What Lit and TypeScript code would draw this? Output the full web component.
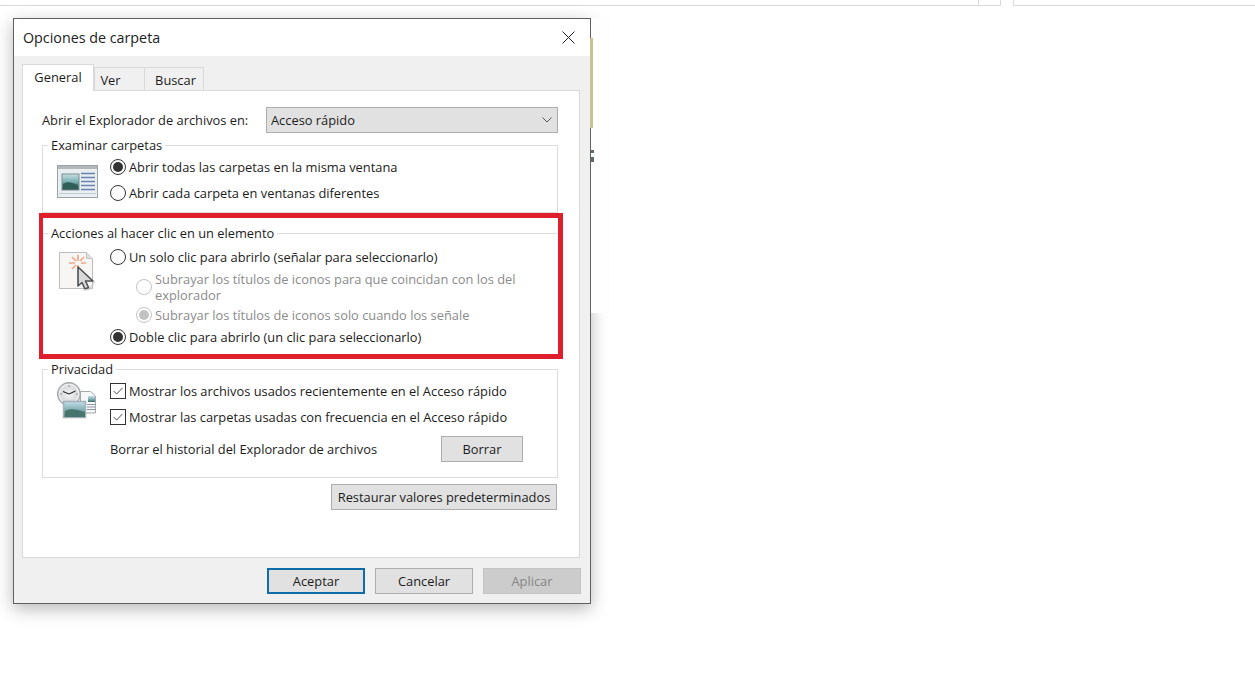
import { LitElement, html, css, svg } from "lit";
import { customElement } from "lit/decorators.js";

const docIcon = svg`<svg class="ico ico1" width="42" height="34" viewBox="0 0 42 34">
  <defs><linearGradient id="p1" x1="0" y1="0" x2="0" y2="1"><stop offset="0" stop-color="#c6e0e4"/><stop offset=".5" stop-color="#78aeb0"/><stop offset="1" stop-color="#1f4d48"/></linearGradient></defs>
  <rect x=".5" y=".5" width="40" height="32" fill="#e9eef1" stroke="#9aa3a8"/>
  <rect x="1" y="1" width="39" height="3" fill="#b4b8ba"/>
  <rect x="5" y="9" width="17" height="16" fill="url(#p1)" stroke="#7d8b92"/>
  <path d="M6 19c4-3 8-2 15 1v4H6z" fill="#2f5f58"/>
  <path d="M24 8.500h14M24 12.500h14M24 16.500h14M24 20.500h14M24 24.500h14" stroke="#6a82b4" stroke-width="1.400"/>
  <path d="M2 28.500h37" stroke="#c3c8cc"/>
</svg>`;

const clickIcon = svg`<svg class="ico ico2" width="38" height="42" viewBox="0 0 38 42">
  <path d="M1.500 2.500h27l6 6v30h-33z" fill="#f7f6f4" stroke="#bcbcbc"/>
  <path d="M28.500 2.500v6h6" fill="#e0e0e0" stroke="#c6c6c6"/>
  <path d="M20 5v6M20 15v4M11 13h6M23 13h5M14 7l4 4M14 19l4-4M26 7l-4 4" stroke="#f0a888" stroke-width="1.700" fill="none"/>
  <path d="M20 17v19l4-3.500 3 6.500 3.500-1.500-3-6.500H35z" fill="#d9d9d9" stroke="#4d5054" stroke-width="1.600" stroke-linejoin="round"/>
  <path d="M25 40l6-.5 6-8" fill="none" stroke="#c9c9c9" stroke-width="1.500" opacity=".7"/>
</svg>`;

const privacyIcon = svg`<svg class="ico ico3" width="42" height="38" viewBox="0 0 42 38">
  <defs>
    <radialGradient id="c1"><stop offset="0" stop-color="#f4f4f4"/><stop offset=".7" stop-color="#d9dbdd"/><stop offset=".85" stop-color="#f0f1f2"/><stop offset="1" stop-color="#9ca2a7"/></radialGradient>
    <linearGradient id="p3" x1="0" y1="0" x2="0" y2="1"><stop offset="0" stop-color="#c4e0ea"/><stop offset=".5" stop-color="#85b0b6"/><stop offset="1" stop-color="#3f6f68"/></linearGradient>
  </defs>
  <circle cx="12" cy="12" r="11.500" fill="url(#c1)" stroke="#9aa0a5"/>
  <path d="M12 12L6 9.500M12 12l6.500-3" stroke="#2c2f33" stroke-width="1.200" fill="none"/>
  <path d="M12 3v2M12 19v2M3 12h2M19 12h2" stroke="#8f8f8f"/>
  <path d="M23.500 9.500h10l5 4.500v17h-15z" fill="#f6f7f8" stroke="#a2a8ad"/>
  <rect x="31" y="14" width="7" height="6" fill="url(#p3)"/>
  <path d="M30 22.500h8M30 25h8M30 27.500h8" stroke="#8c98b0"/>
  <rect x="6.500" y="19.500" width="22" height="16" fill="url(#p3)" stroke="#a3b0ba" stroke-width="1.500"/>
  <path d="M8 29c5-3 11-2 20 1v5H8z" fill="#47756d"/>
</svg>`;

@customElement("app-root")
export class AppRoot extends LitElement {
  static styles = css`
    :host { display: block; position: relative; width: 1255px; height: 675px; background: #fff; overflow: hidden;
      font-family: "Open Sans", "Noto Sans", sans-serif; font-size: 12.85px; color: #1c1c1c; }
    * { box-sizing: border-box; }
    .top { display: flex; height: 6px; border-bottom: 1px solid #d9d9d9; }
    .top .a { width: 978px; }
    .top .b { width: 23px; border-left: 1px solid #d9d9d9; border-right: 1px solid #d9d9d9; }
    .top .c { width: 12px; background: #fff; margin-bottom: -1px; }
    .top .d { flex: 1; border-left: 1px solid #d9d9d9; }
    .behind { position: absolute; left: 591px; top: 18px; width: 20px; height: 295px; background: #fefefe; }
    .strip { position: absolute; left: 590px; top: 38px; width: 3px; height: 90px; background: #c9c194; }
    .frag { position: absolute; left: 591px; top: 150px; width: 3px; height: 12px; border-top: 3px solid #5c6770; border-bottom: 5px solid #5c6770; }
    .dialog { position: absolute; left: 13px; top: 18px; width: 578px; height: 586px; display: flex; flex-direction: column;
      background: #f0f0f0; border: 1px solid #5f5f5f; box-shadow: 0 5px 16px rgba(0,0,0,.28); }
    .title { height: 37px; flex: none; background: #fff; display: flex; align-items: center; justify-content: space-between; padding: 0 15px 0 9px; font-size: 14.3px; color: #222; }
    .close { display: block; }
    .body { flex: 1; display: flex; flex-direction: column; padding: 8px 10px 9px 8px; }
    .tabs { display: flex; align-items: flex-end; height: 26px; flex: none; position: relative; z-index: 1; }
    .tab { height: 23px; background: #f0f0f0; border: 1px solid #d9d9d9; border-bottom: none; margin-left: -1px; display: flex; align-items: center; justify-content: center; padding-top: 2px; }
    .tab.active { height: 27px; margin: 0 0 -1px 0; background: #fff; width: 72px; padding: 0 0 3px; }
    .tab.ver { width: 51px; margin-left: 0; padding-right: 18px; }
    .tab.buscar { width: 60px; padding-left: 3px; }
    .panel { height: 468px; flex: none; background: #fff; border: 1px solid #d9d9d9; padding: 16px 21px 0 19px; display: flex; flex-direction: column; }
    .combo-row { display: flex; align-items: center; justify-content: space-between; height: 26px; flex: none; }
    .combo { width: 292px; height: 26px; background: #e1e1e1; border: 1px solid #adadad; display: flex; align-items: center; justify-content: space-between; padding: 0 5px 0 4px; }
    .group { border: 1px solid #dcdcdc; flex: none; width: 516px; }
    .g1 { margin-top: 12px; height: 68px; }
    .g2 { margin-top: 20px; height: 123px; border-right-color: transparent; }
    .g3 { margin-top: 13px; height: 109px; }
    .legend { width: fit-content; height: 16px; line-height: 17px; margin: -9px 0 0 5px; padding: 0 3px; background: #fff; }
    .gbody { display: flex; }
    .iconcol { width: 67px; flex: none; }
    .ico { display: block; }
    .ico1 { margin: 11px 0 0 14px; }
    .ico2 { margin: 4px 0 0 15px; }
    .ico3 { margin: 4px 0 0 14px; }
    .rows { flex: 1; display: flex; flex-direction: column; }
    .g1 .gbody { margin-top: 1px; }
    .g2 .gbody { margin-top: 5px; }
    .g3 .gbody { margin-top: 1px; }
    .row { display: flex; align-items: center; gap: 3px; height: 26px; flex: none; }
    .row.r22 { height: 22px; }
    .row.sub { margin-left: 26px; color: #8b8b8b; line-height: 16px; height: 16px; }
    .row.sub.two { height: 32px; margin-top: 3px; }
    .row.sub.low { margin-top: 4px; margin-bottom: 3px; }
    .radio { width: 16px; height: 16px; border-radius: 50%; border: 1px solid #333; background: #fff; flex: none; display: flex; align-items: center; justify-content: center; }
    .radio.on::after { content: ""; width: 10px; height: 10px; border-radius: 50%; background: #333; }
    .sub .radio { border-color: #c4c4c4; }
    .sub .radio.on::after { background: #c2c2c2; }
    .check { width: 16px; height: 16px; border: 1px solid #333; background: #fff; flex: none; display: block; }
    .clear { margin-top: 6px; display: flex; align-items: center; justify-content: space-between; height: 26px; padding-right: 34px; }
    .btn { height: 26px; background: #e1e1e1; border: 1px solid #adadad; display: flex; align-items: center; justify-content: center; flex: none; }
    .borrar { width: 82px; }
    .restore-row { display: flex; justify-content: flex-end; margin-top: 6px; }
    .restore { width: 226px; margin-right: 1px; }
    .footer { display: flex; justify-content: flex-end; gap: 10px; margin-top: 10px; margin-right: -1px; }
    .footer .btn { width: 98px; }
    .primary { border: 2px solid #0f6ca8; }
    .disabled { background: #cccccc; border-color: #c4c4c4; color: #858585; }
    .red { position: absolute; left: 39px; top: 213px; width: 524px; height: 146px; border: 5px solid #e01f2d; border-left-width: 4px; pointer-events: none; }
  `;

  private radio(on = false) {
    return html`<span class="radio ${on ? "on" : ""}"></span>`;
  }

  private check() {
    return html`<svg class="check" viewBox="0 0 16 16"><path d="M3 8l3.500 3.500L13 4.500" fill="none" stroke="#333" stroke-width="1"/></svg>`;
  }

  render() {
    return html`
      <div class="top"><div class="a"></div><div class="b"></div><div class="c"></div><div class="d"></div></div>
      <div class="dialog">
        <div class="title">
          <span>Opciones de carpeta</span>
          <svg class="close" width="13" height="13" viewBox="0 0 13 13"><path d="M.5.5l12 12M12.500.5l-12 12" stroke="#222" fill="none"/></svg>
        </div>
        <div class="body">
          <div class="tabs">
            <div class="tab active">General</div>
            <div class="tab ver">Ver</div>
            <div class="tab buscar">Buscar</div>
          </div>
          <div class="panel">
            <div class="combo-row">
              <span>Abrir el Explorador de archivos en:</span>
              <div class="combo">
                <span>Acceso rápido</span>
                <svg width="10" height="6" viewBox="0 0 10 6"><path d="M.5.500L5 5 9.500.5" fill="none" stroke="#555"/></svg>
              </div>
            </div>
            <div class="group g1">
              <div class="legend">Examinar carpetas</div>
              <div class="gbody">
                <div class="iconcol">${docIcon}</div>
                <div class="rows">
                  <div class="row">${this.radio(true)}<span>Abrir todas las carpetas en la misma ventana</span></div>
                  <div class="row">${this.radio()}<span>Abrir cada carpeta en ventanas diferentes</span></div>
                </div>
              </div>
            </div>
            <div class="group g2">
              <div class="legend">Acciones al hacer clic en un elemento</div>
              <div class="gbody">
                <div class="iconcol">${clickIcon}</div>
                <div class="rows">
                  <div class="row r22">${this.radio()}<span>Un solo clic para abrirlo (señalar para seleccionarlo)</span></div>
                  <div class="row sub two">${this.radio()}<span>Subrayar los títulos de iconos para que coincidan con los del<br>explorador</span></div>
                  <div class="row sub low">${this.radio(true)}<span>Subrayar los títulos de iconos solo cuando los señale</span></div>
                  <div class="row r22">${this.radio(true)}<span>Doble clic para abrirlo (un clic para seleccionarlo)</span></div>
                </div>
              </div>
            </div>
            <div class="group g3">
              <div class="legend">Privacidad</div>
              <div class="gbody">
                <div class="iconcol">${privacyIcon}</div>
                <div class="rows">
                  <div class="row">${this.check()}<span>Mostrar los archivos usados recientemente en el Acceso rápido</span></div>
                  <div class="row">${this.check()}<span>Mostrar las carpetas usadas con frecuencia en el Acceso rápido</span></div>
                  <div class="clear"><span>Borrar el historial del Explorador de archivos</span><div class="btn borrar">Borrar</div></div>
                </div>
              </div>
            </div>
            <div class="restore-row"><div class="btn restore">Restaurar valores predeterminados</div></div>
          </div>
          <div class="footer">
            <div class="btn primary">Aceptar</div>
            <div class="btn">Cancelar</div>
            <div class="btn disabled">Aplicar</div>
          </div>
        </div>
      </div>
      <div class="behind"></div>
      <div class="strip"></div>
      <div class="frag"></div>
      <div class="red"></div>
    `;
  }
}
